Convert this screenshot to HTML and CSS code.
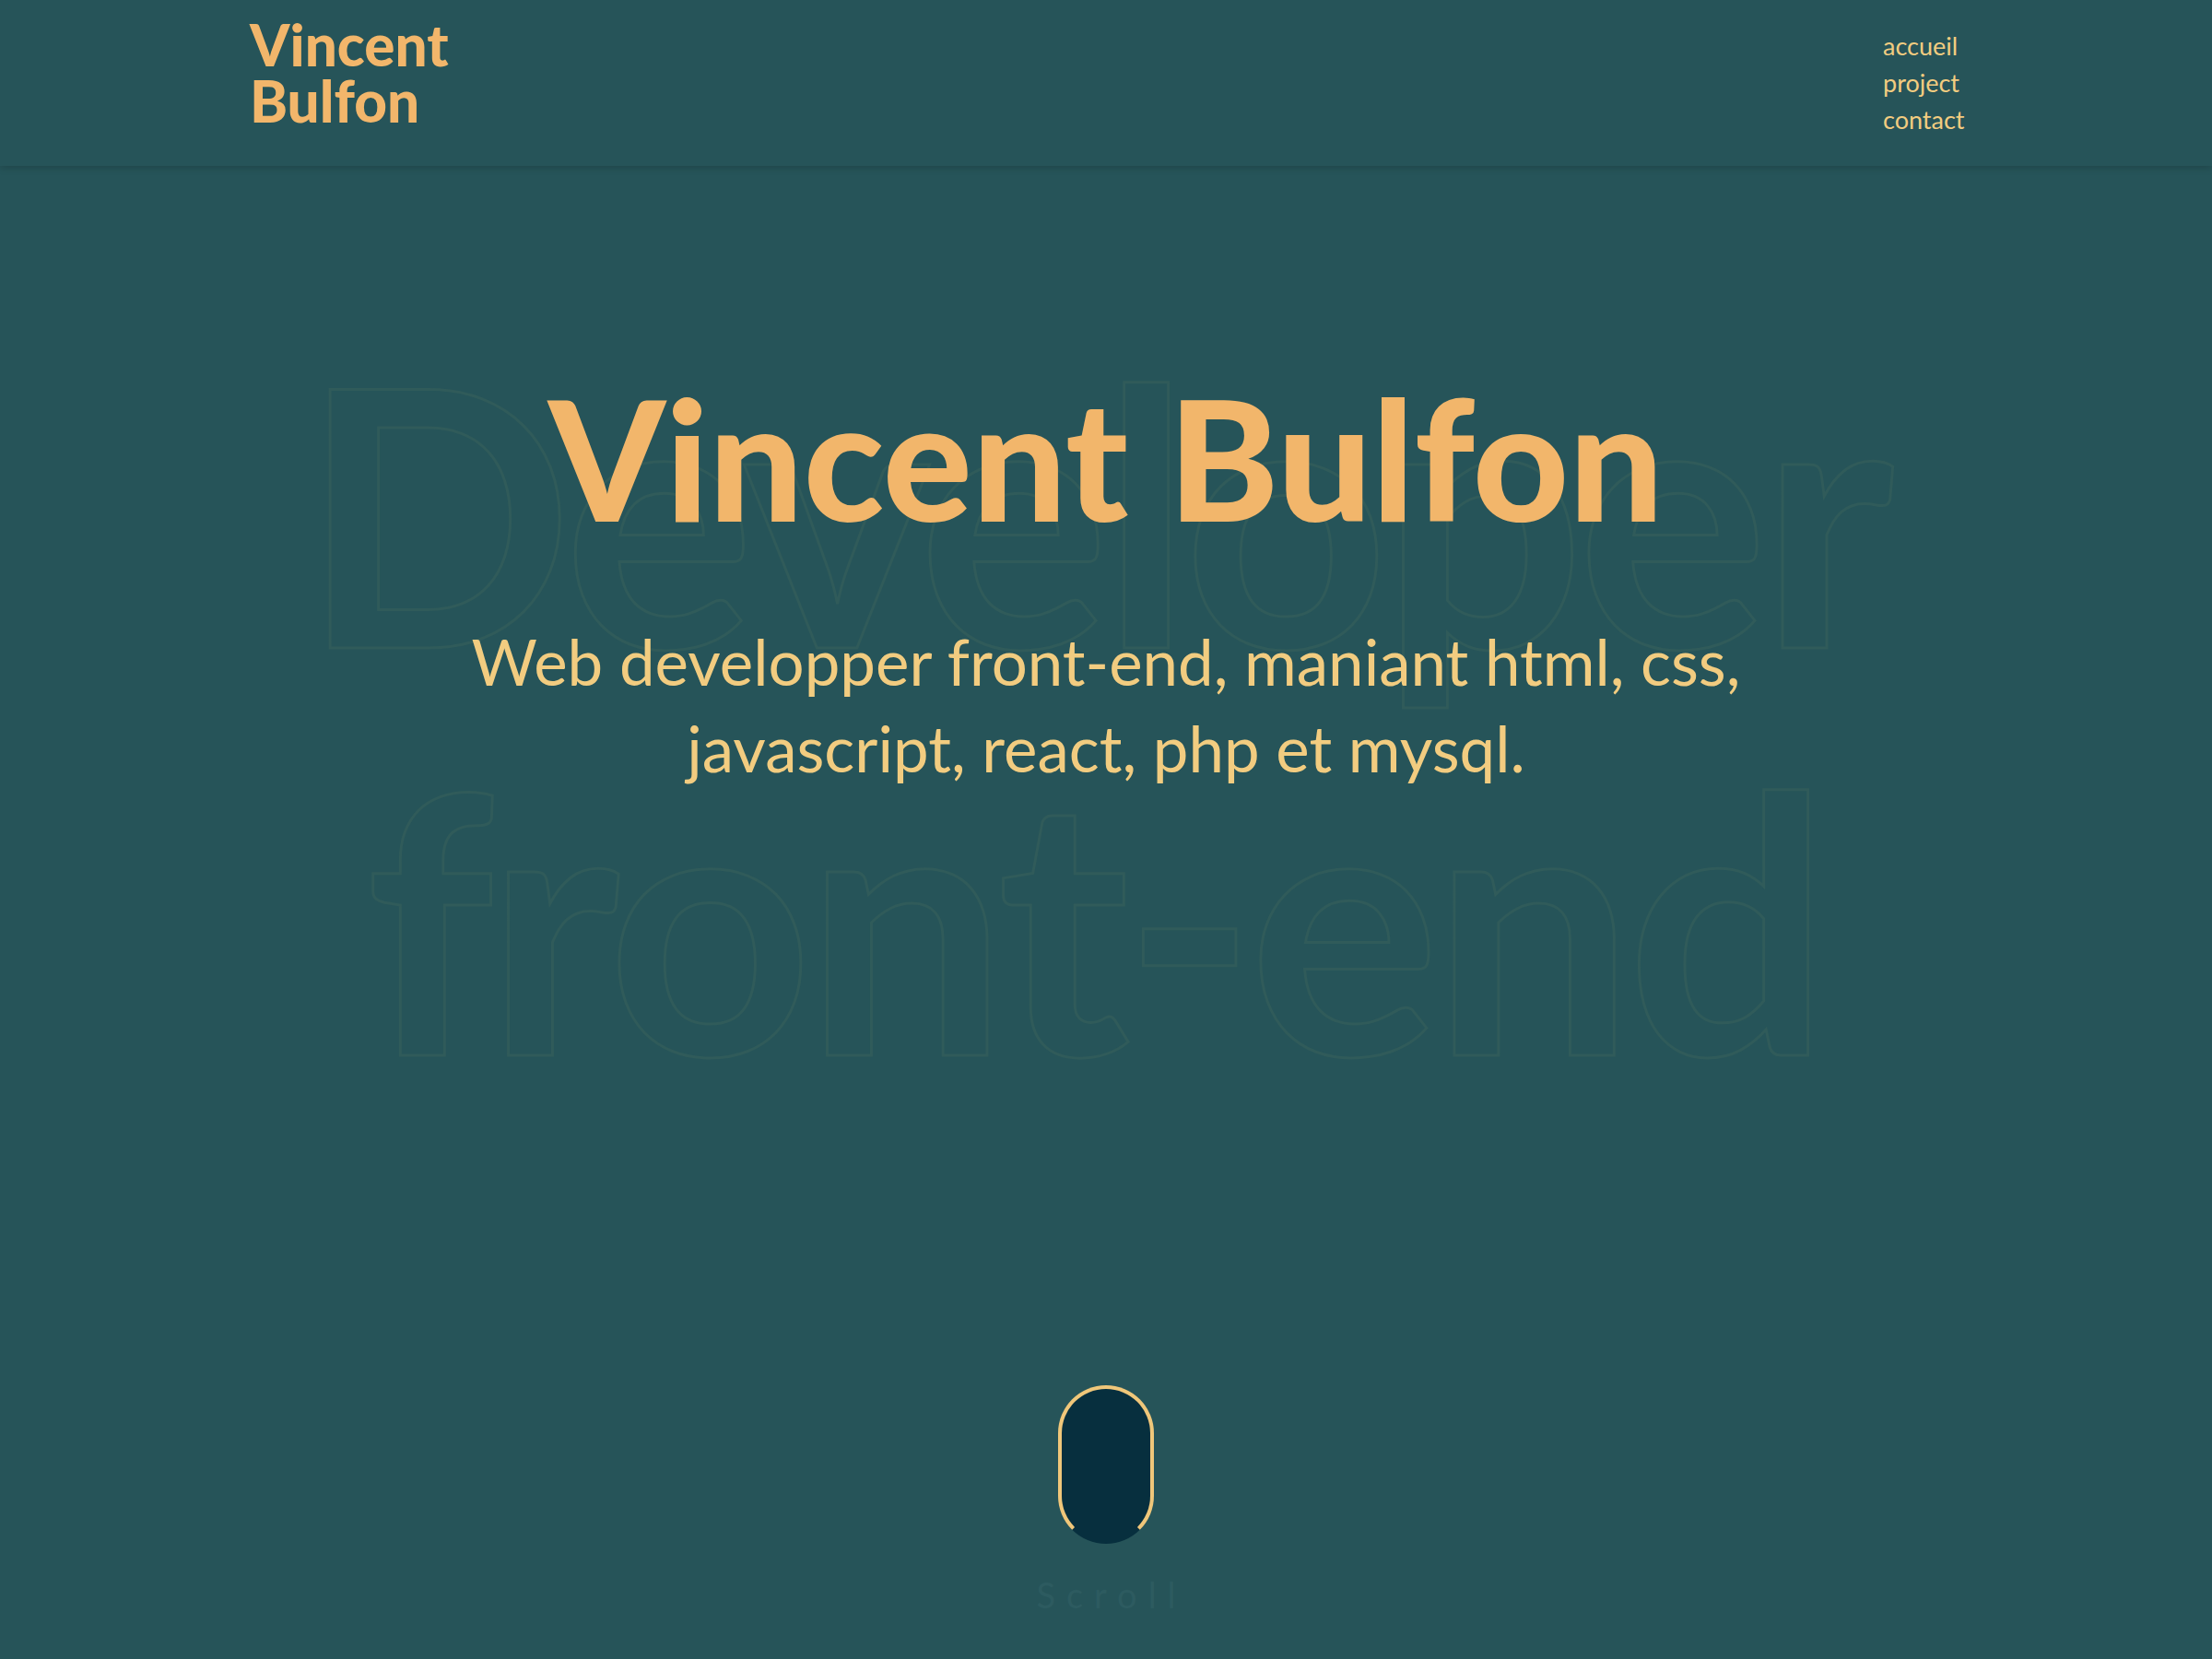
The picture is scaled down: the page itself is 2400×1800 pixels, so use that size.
FILE: index.html
```html
<!DOCTYPE html>
<html lang="fr">
<head>
<meta charset="utf-8">
<title>Vincent Bulfon</title>
<link rel="stylesheet" href="styles.css">
</head>
<body>
<header class="site-header">
  <div class="container header-inner">
    <a class="logo" href="#">Vincent<br>Bulfon</a>
    <nav class="nav">
      <a href="#">accueil</a>
      <a href="#">project</a>
      <a href="#">contact</a>
    </nav>
  </div>
</header>
<main class="hero">
  <div class="bg-text" aria-hidden="true">
    <span class="bg-line">Developer</span>
    <span class="bg-line">front-end</span>
  </div>
  <h1 class="title">Vincent Bulfon</h1>
  <p class="subtitle">Web developper front-end, maniant html, css,<br>javascript, react, php et mysql.</p>
  <div class="scroll">
    <div class="mouse"></div>
    <span class="scroll-label">Scroll</span>
  </div>
</main>
</body>
</html>
```

FILE: styles.css
```css
html, body {
  margin: 0;
  padding: 0;
}
body {
  background: #265459;
  font-family: Lato, "Noto Sans", sans-serif;
  min-height: 1800px;
  overflow: hidden;
}
.container {
  width: 1858px;
  margin: 0 auto;
}
.site-header {
  height: 180px;
  box-shadow: 0 2px 8px rgba(0, 0, 0, 0.18);
  position: relative;
  z-index: 2;
}
.header-inner {
  display: flex;
  justify-content: space-between;
  align-items: flex-start;
}
.logo {
  display: block;
  margin-top: 18px;
  color: #f2b66b;
  font-weight: 900;
  font-size: 62px;
  line-height: 61px;
  text-decoration: none;
}
.nav {
  display: flex;
  flex-direction: column;
  margin-top: 30px;
  width: 86px;
}
.nav a {
  color: #f2cc80;
  font-size: 27px;
  line-height: 40px;
  text-decoration: none;
}
.hero {
  position: relative;
  display: flex;
  flex-direction: column;
  align-items: center;
  padding-top: 226px;
}
.bg-text {
  position: absolute;
  left: 0;
  right: 26px;
  top: 152px;
  display: flex;
  flex-direction: column;
  align-items: center;
  font-weight: 700;
  font-size: 388px;
  line-height: 442px;
  letter-spacing: -8px;
  color: transparent;
  -webkit-text-stroke: 3px #305b5a;
  z-index: 0;
}
.bg-line {
  display: block;
}
.title {
  position: relative;
  z-index: 1;
  margin: 0;
  color: #f2b66b;
  font-weight: 900;
  font-size: 181px;
  line-height: 181px;
}
.subtitle {
  position: relative;
  z-index: 1;
  margin: 84px 0 0;
  color: #f2cc80;
  font-size: 69px;
  line-height: 94px;
  text-align: center;
}
.scroll {
  position: relative;
  z-index: 1;
  display: flex;
  flex-direction: column;
  align-items: center;
  margin-top: 644px;
}
.mouse {
  box-sizing: border-box;
  width: 104px;
  height: 172px;
  border: 4px solid #f0c77a;
  border-bottom-color: transparent;
  border-radius: 52px;
  background: #072f3e;
}
.scroll-label {
  margin-top: 32px;
  color: #2d5b60;
  font-size: 38px;
  letter-spacing: 12px;
  padding-left: 12px;
}
```
